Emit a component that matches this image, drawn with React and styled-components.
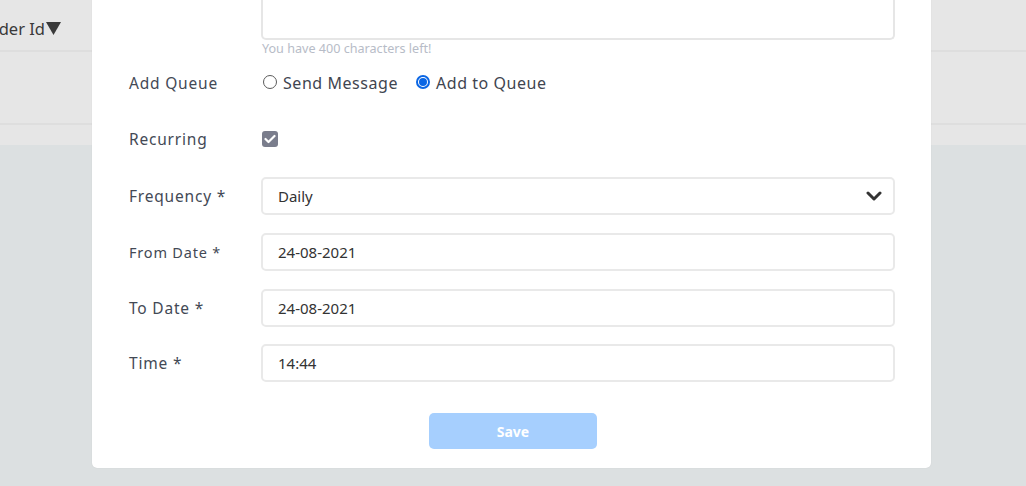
import React from "react";
import styled, { createGlobalStyle } from "styled-components";

const Global = createGlobalStyle`
  * { box-sizing: border-box; }
  html, body { margin: 0; padding: 0; }
  body { font-family: "Noto Sans", "Open Sans", sans-serif; background: #dce0e1; }
`;

const Page = styled.div`
  position: relative;
  width: 1026px;
  height: 486px;
  overflow: hidden;
  background: #dce0e1;
  display: flex;
  flex-direction: column;
`;

const TableHead = styled.div`
  height: 52px;
  background: #e6e6e6;
  border-bottom: 2px solid #dedede;
  display: flex;
  align-items: center;
  padding-top: 7px;
`;

const HeadCell = styled.div`
  width: 61px;
  overflow: hidden;
  display: flex;
  align-items: center;
  justify-content: flex-end;
  gap: 1px;
  white-space: nowrap;
  font-size: 16.5px;
  color: #3a3a3a;
  & > * { flex-shrink: 0; }
`;

const HeadText = styled.span`
  flex-shrink: 0;
`;

const TableRow = styled.div`
  height: 73px;
  background: #e6e6e6;
  border-bottom: 2px solid #dedede;
`;

const TableFoot = styled.div`
  height: 20px;
  background: #e6e6e6;
`;

const Modal = styled.div`
  position: absolute;
  left: 92px;
  bottom: 18px;
  width: 839px;
  background: #fff;
  border-radius: 0 0 5px 5px;
  box-shadow: 0 0 1px rgba(0, 0, 0, 0.14);
  padding: 0 36px 19px 37px;
  display: flex;
  flex-direction: column;
`;

const Row = styled.div`
  display: flex;
  align-items: center;
  min-height: 38px;
  margin-top: ${(p) => p.$mt ?? 18}px;
`;

const Label = styled.div`
  width: 132px;
  flex-shrink: 0;
  font-size: ${(p) => p.$size ?? 15.5}px;
  letter-spacing: 0.8px;
  color: #434955;
`;

const Field = styled.div`
  width: 634px;
  display: flex;
  align-items: center;
  gap: 18px;
`;

const TextArea = styled.div`
  margin-left: 132px;
  width: 634px;
  height: 70px;
  border: 2px solid #e6e6e6;
  border-top: none;
  border-radius: 0 0 5px 5px;
`;

const Helper = styled.div`
  margin-left: 133px;
  margin-top: 1px;
  font-size: 12.6px;
  line-height: 16px;
  color: #b7bcc7;
`;

const Input = styled.div`
  width: 634px;
  height: 38px;
  border: 2px solid #e9e9e9;
  border-radius: 5px;
  padding: 0 11px 0 15px;
  display: flex;
  align-items: center;
  justify-content: space-between;
  font-size: 15px;
  color: #333;
`;

const RadioOption = styled.label`
  display: flex;
  align-items: center;
  gap: 6px;
  font-size: 16px;
  letter-spacing: 0.55px;
  color: #3f4550;
  &:first-child { margin-left: 2px; }
`;

const RadioDot = styled.span`
  width: 14px;
  height: 14px;
  border-radius: 50%;
  border: ${(p) => (p.$checked ? "2px solid #0b66e4" : "1px solid #5b5b5b")};
  display: flex;
  align-items: center;
  justify-content: center;
  margin-top: -2px;
  &::after {
    content: "";
    display: ${(p) => (p.$checked ? "block" : "none")};
    width: 8px;
    height: 8px;
    border-radius: 50%;
    background: #0b66e4;
  }
`;

const Check = styled.span`
  width: 16px;
  height: 16px;
  margin-left: 1px;
  border-radius: 3px;
  background: #7a7d8c;
  display: flex;
  align-items: center;
  justify-content: center;
`;

const Actions = styled.div`
  display: flex;
  justify-content: center;
  margin-top: 31px;
  padding-left: 2px;
`;

const SaveButton = styled.button`
  width: 168px;
  height: 36px;
  border: none;
  border-radius: 5px;
  background: #a6cffe;
  color: #fff;
  font-family: "Noto Sans", sans-serif;
  font-weight: 700;
  font-size: 14px;
`;

const Chevron = () => (
  <svg width="16" height="12" viewBox="0 0 16 12">
    <polyline points="2,3 8,9 14,3" fill="none" stroke="#333" strokeWidth="3" strokeLinecap="round" strokeLinejoin="round" />
  </svg>
);

const SortArrow = () => (
  <svg width="15" height="13" viewBox="0 0 15 13">
    <polygon points="0,0 15,0 7.5,13" fill="#3a3a3a" />
  </svg>
);

export default function App() {
  return (
    <>
      <Global />
      <Page>
        <TableHead>
          <HeadCell>
            <HeadText>Sender Id</HeadText>
            <SortArrow />
          </HeadCell>
        </TableHead>
        <TableRow />
        <TableFoot />
        <Modal>
          <TextArea />
          <Helper>You have 400 characters left!</Helper>
          <Row $mt={7}>
            <Label>Add Queue</Label>
            <Field>
              <RadioOption>
                <RadioDot />
                Send Message
              </RadioOption>
              <RadioOption>
                <RadioDot $checked />
                Add to Queue
              </RadioOption>
            </Field>
          </Row>
          <Row>
            <Label>Recurring</Label>
            <Field>
              <Check>
                <svg width="12" height="10" viewBox="0 0 12 10">
                  <polyline points="1.5,5 4.5,8 10.5,2" fill="none" stroke="#fff" strokeWidth="2.2" strokeLinecap="round" strokeLinejoin="round" />
                </svg>
              </Check>
            </Field>
          </Row>
          <Row $mt={19}>
            <Label>Frequency *</Label>
            <Input>
              Daily
              <Chevron />
            </Input>
          </Row>
          <Row>
            <Label $size={14.5}>From Date *</Label>
            <Input>24-08-2021</Input>
          </Row>
          <Row>
            <Label>To Date *</Label>
            <Input>24-08-2021</Input>
          </Row>
          <Row $mt={17}>
            <Label>Time *</Label>
            <Input>14:44</Input>
          </Row>
          <Actions>
            <SaveButton>Save</SaveButton>
          </Actions>
        </Modal>
      </Page>
    </>
  );
}
